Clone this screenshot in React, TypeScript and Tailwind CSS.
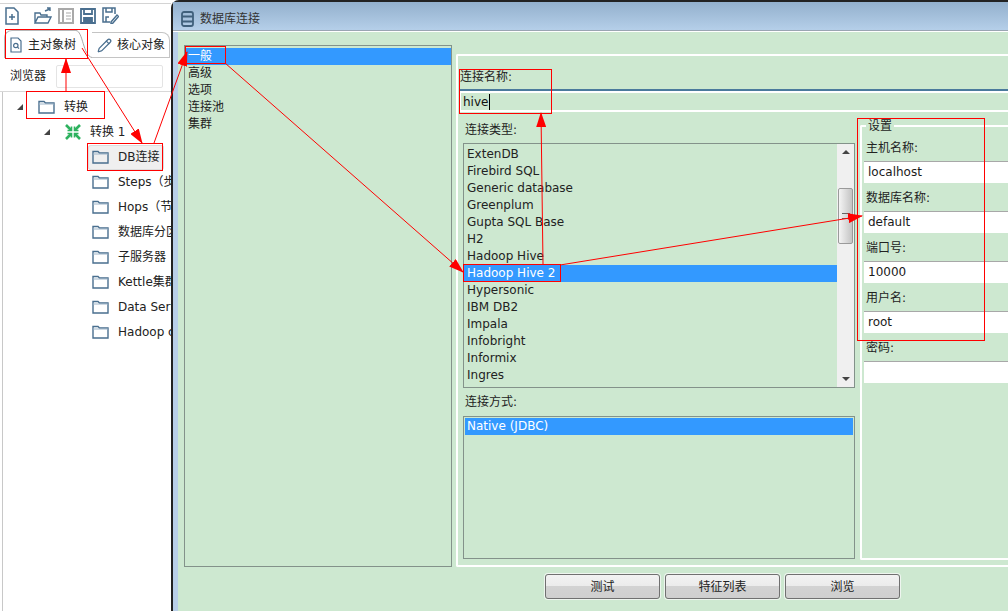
import { Pencil } from 'lucide-react';

const font = '[font-family:"DejaVu_Sans","Noto_Sans_CJK_SC",sans-serif]';

const types = [
  'ExtenDB', 'Firebird SQL', 'Generic database', 'Greenplum', 'Gupta SQL Base', 'H2', 'Hadoop Hive',
  'Hadoop Hive 2', 'Hypersonic', 'IBM DB2', 'Impala', 'Infobright', 'Informix', 'Ingres',
];
const treeItems = ['DB连接', 'Steps（步骤）', 'Hops（节点连接）', '数据库分区', '子服务器', 'Kettle集群', 'Data Services', 'Hadoop clusters'];
const settings = [
  { label: '主机名称:', value: 'localhost' },
  { label: '数据库名称:', value: 'default' },
  { label: '端口号:', value: '10000' },
  { label: '用户名:', value: 'root' },
  { label: '密码:', value: '' },
];

function Folder() {
  return (
    <svg width="17" height="14" viewBox="0 0 17 14" className="shrink-0" fill="none">
      <path d="M1 3V1.500h5L7.500 3H16v10H1z" stroke="#4a6f8f" strokeWidth="1.400" />
      <path d="M1 4h15" stroke="#9db4c8" strokeWidth="1" />
    </svg>
  );
}

function Toolbar() {
  return (
    <div className="flex h-[28px] items-center gap-[6px] pl-[5px] pt-[3px]">
      <svg width="14" height="18" viewBox="0 0 14 18" fill="none" stroke="#4a6f8f" strokeWidth="1.500">
        <path d="M1 1h8l4 4v12H1zM4 10h6M7 7v6" />
      </svg>
      <svg className="ml-[9px]" width="18" height="18" viewBox="0 0 18 18" fill="none" stroke="#4a6f8f" strokeWidth="1.400">
        <path d="M1 16V6h5l1 2h6v2M1 16l3-6h13l-3 6zM11 4l5-2M13 1h3v3" />
      </svg>
      <svg width="16" height="16" viewBox="0 0 16 16" fill="none" stroke="#a9a9a9" strokeWidth="2">
        <path d="M1 1h14v14H1zM5 1v14" />
        <path d="M8 5h5M8 8h5M8 11h5" strokeWidth="1.200" />
      </svg>
      <svg width="16" height="16" viewBox="0 0 16 16" fill="none" stroke="#4a6f8f" strokeWidth="1.800">
        <path d="M1 1h14v14H1zM4 1v5h8V1" />
        <path d="M4 10h8v5H4z" fill="#4a6f8f" />
      </svg>
      <svg width="17" height="17" viewBox="0 0 17 17" fill="none" stroke="#4a6f8f" strokeWidth="1.500">
        <path d="M8 15H1V1h12v6M4 1v4h6V1M4 15v-5h3M9 15l6-7 1.500 1.500-6 7H9z" />
      </svg>
    </div>
  );
}

function Tabs() {
  return (
    <div className="flex h-[30px] items-end pl-[4px]">
      <div className="flex h-[28px] w-[72px] shrink-0 items-center gap-[6px] rounded-tl-[8px] border-l border-t border-[#b8b8b8] pl-[5px]">
        <svg width="12" height="16" viewBox="0 0 12 16" fill="none" stroke="#4a6f8f" strokeWidth="1.200" className="shrink-0">
          <path d="M1 1h7l3 3v11H1z" />
          <circle cx="5.800" cy="8.500" r="2.200" />
          <path d="M7.500 10.200l1.500 1.500" />
        </svg>
        <span className="whitespace-nowrap">主对象树</span>
      </div>
      <svg width="16" height="28" viewBox="0 0 16 28" fill="none" className="shrink-0">
        <path d="M0 .5C7 1 7 26 16 27.500" stroke="#a8a8a8" />
      </svg>
      <div className="flex h-[26px] w-[78px] shrink-0 items-center gap-[5px] rounded-tr-[8px] border-b border-r border-t border-[#c4c4c4] pl-[5px]">
        <Pencil size={15} className="text-[#4a6f8f]" />
        <span className="whitespace-nowrap">核心对象</span>
      </div>
    </div>
  );
}

function LeftPanel() {
  return (
    <div className="w-[171px] shrink-0 overflow-hidden bg-white text-[12px] text-[#222]">
      <div className="mt-[3px] h-px w-[171px] bg-[#d4d4d4]" />
      <div className="-mt-[4px]">
        <Toolbar />
      </div>
      <Tabs />
      <div className="flex h-[34px] items-center gap-[10px] border-b border-[#d8d8d8] pl-[10px] pt-[3px]">
        浏览器
        <div className="h-[23px] w-[107px] rounded-[2px] border border-[#e4e4e4] bg-white" />
      </div>
      <div className="ml-[2px] flex min-h-[519px] flex-col border-l border-[#c8c8c8] pt-[2px]">
        <div className="flex h-[25px] items-center pl-[14px]">
          <span className="mr-[15px] h-0 w-0 border-b-[6px] border-l-[6px] border-b-[#444] border-l-transparent" />
          <Folder />
          <span className="ml-[9px]">转换</span>
        </div>
        <div className="flex h-[25px] items-center pl-[41px]">
          <span className="mr-[15px] h-0 w-0 border-b-[6px] border-l-[6px] border-b-[#444] border-l-transparent" />
          <svg width="16" height="16" viewBox="0 0 16 16" fill="none" stroke="#2eb25f" strokeWidth="2.600">
            <path d="M1 1l5 5M10 10l5 5M15 1l-5 5M6 10l-5 5" />
            <path d="M2.500 6.500h4v-4M13.500 6.500h-4v-4M2.500 9.500h4v4M13.500 9.500h-4v4" strokeWidth="1.600" />
          </svg>
          <span className="ml-[9px]">转换 1</span>
        </div>
        {treeItems.map((item, i) => (
          <div key={item} className={`flex h-[25px] items-center pl-[85px] ${i === 0 ? 'pt-px' : ''}`}>
            <div className={`flex h-[25px] w-[76px] shrink-0 items-center gap-[9px] whitespace-nowrap pl-[4px] ${i === 0 ? 'rounded-[3px] bg-[#efefef] shadow-[inset_0_0_0_1px_#dcdcdc]' : ''}`}>
              <Folder />
              {item}
            </div>
          </div>
        ))}
      </div>
    </div>
  );
}

function ListBox() {
  return (
    <div className="flex h-[245px] w-[392px] border border-[#83928a]">
      <div className="flex-1 pt-[2px]">
        {types.map((t) => (
          <div key={t} className={`h-[17px] pl-[3px] leading-[17px] ${t === 'Hadoop Hive 2' ? 'bg-[#3399ff] text-white' : ''}`}>{t}</div>
        ))}
      </div>
      <div className="relative flex w-[17px] flex-col items-center justify-between bg-[#f0f0f0] py-[6px]">
        <span className="h-0 w-0 border-x-[4px] border-b-[4px] border-x-transparent border-b-[#444]" />
        <span className="h-0 w-0 border-x-[4px] border-t-[4px] border-x-transparent border-t-[#444]" />
        <div className="absolute left-[1px] top-[44px] flex h-[56px] w-[15px] items-center justify-center rounded-[2px] border border-[#9a9a9a] bg-gradient-to-r from-[#f4f4f4] to-[#c4c4c4]">
          <span className="h-[6px] w-[8px] border-y border-[#666]" />
        </div>
      </div>
    </div>
  );
}

function Settings() {
  return (
    <div className="ml-[3px] mt-[13px] h-[435px] flex-1 rounded-l-[2px] border-b-2 border-l-2 border-t-2 border-white pl-[2px]">
      <div className="mb-[8px] ml-[2px] -mt-[8px] h-[14px] w-fit bg-[#cde8d0] px-[2px] leading-[14px]">设置</div>
      <div className="flex flex-col gap-[8px]">
        {settings.map((s) => (
          <div key={s.label}>
            <div className="h-[20px] pl-[2px] leading-[14px]">{s.label}</div>
            <div className="h-[22px] border-t border-[#a8a8a8] bg-white pl-[4px] leading-[21px] text-[#1a1a1a]">{s.value}</div>
          </div>
        ))}
      </div>
    </div>
  );
}

function Button({ label }: { label: string }) {
  return (
    <div className="flex h-[25px] w-[115px] items-center justify-center overflow-hidden rounded-[3px] border border-[#707070] bg-[linear-gradient(#f2f2f2_0%,#ebebeb_48%,#d2d2d2_50%,#cfcfcf_100%)] shadow-[0_0_0_1px_#eef5ef]">
      {label}
    </div>
  );
}

function Dialog() {
  return (
    <div className="flex min-w-0 flex-1 flex-col rounded-tl-[8px] border-l-2 border-t-2 border-[#222] bg-[#b9cfe8] text-[12px] text-[#222]">
      <div className="flex h-[29px] shrink-0 items-center gap-[6px] border-b border-[#9aa5b2] bg-gradient-to-b from-[#93b0cd] to-[#b5cfe9] pl-[8px] pt-[6px] text-[#333]">
        <svg width="13" height="16" viewBox="0 0 13 16" fill="none" stroke="#40607c" strokeWidth="1.800">
          <rect x="1" y="1" width="11" height="14" rx="2" />
          <path d="M1 5.500h11M1 10.500h11" />
        </svg>
        数据库连接
      </div>
      <div className="h-px shrink-0 bg-white" />
      <div className="ml-[5px] flex min-h-0 flex-1 flex-col bg-[#cde8d0] pl-[6px] pt-[13px]">
        <div className="flex h-[522px]">
          <div className="h-[522px] w-[268px] shrink-0 border border-[#83928a] pt-[2px]">
            <div className="h-[17px] bg-[#3399ff] pl-[3px] leading-[17px] text-white">一般</div>
            {['高级', '选项', '连接池', '集群'].map((t) => (
              <div key={t} className="h-[17px] pl-[3px] leading-[17px]">{t}</div>
            ))}
          </div>
          <div className="ml-[4px] mt-[9px] flex h-[513px] min-w-0 flex-1 flex-col rounded-l-[2px] border-b-2 border-l-2 border-t-2 border-white">
            <div className="mt-[14px] pl-[2px] leading-[14px]">连接名称:</div>
            <div className="ml-[1px] mt-[5px] border-t-2 border-[#4a7a9c]">
              <div className="flex h-[21px] items-center border-b-2 border-l-2 border-t-2 border-white pl-[2px] text-[#111]">
                hive<span className="ml-[1px] h-[16px] w-px bg-black" />
              </div>
            </div>
            <div className="flex">
              <div className="ml-[5px] w-[392px] shrink-0">
                <div className="mt-[11px] h-[20px] pl-[2px] leading-[14px]">连接类型:</div>
                <ListBox />
                <div className="mt-[7px] h-[21px] pl-[2px] leading-[14px]">连接方式:</div>
                <div className="h-[143px] w-[392px] border border-[#83928a] p-px">
                  <div className="h-[17px] bg-[#3399ff] pl-[2px] leading-[17px] text-white">Native (JDBC)</div>
                </div>
              </div>
              <div className="ml-[2px] flex min-w-0 flex-1">
                <Settings />
              </div>
            </div>
          </div>
        </div>
        <div className="mt-[7px] flex gap-[5px] pl-[361px]">
          <Button label="测试" />
          <Button label="特征列表" />
          <Button label="浏览" />
        </div>
      </div>
    </div>
  );
}

// the red marks someone drew on top of the screenshot
function Annotations() {
  const rects = [
    [5, 29, 82, 29], [26, 91, 78, 27], [87, 143, 75, 27], [185, 46, 40, 17],
    [459, 69, 92, 44], [463, 264, 97, 17], [857, 118, 127, 222],
  ];
  const arrows = [
    [66, 91, 66, 59], [82, 48, 142, 143], [154, 143, 187, 52], [225, 63, 463, 272],
    [543, 264, 541, 113], [560, 265, 862, 216],
  ];
  return (
    <svg className="pointer-events-none absolute inset-0" width="1008" height="611">
      <defs>
        <marker id="head" markerWidth="15" markerHeight="10" refX="14" refY="5" orient="auto" markerUnits="userSpaceOnUse">
          <path d="M0 0L15 5L0 10z" fill="#ff0000" />
        </marker>
      </defs>
      {rects.map(([x, y, w, h]) => (
        <rect key={`${x}-${y}`} x={x + 0.5} y={y + 0.5} width={w} height={h} fill="none" stroke="#ff0000" />
      ))}
      {arrows.map(([x1, y1, x2, y2]) => (
        <line key={`${x1}-${y1}`} x1={x1} y1={y1} x2={x2} y2={y2} stroke="#ff0000" strokeWidth="1" markerEnd="url(#head)" />
      ))}
    </svg>
  );
}

export default function App() {
  return (
    <div className={`relative flex h-[611px] w-[1008px] overflow-hidden bg-white ${font}`}>
      <LeftPanel />
      <Dialog />
      <Annotations />
    </div>
  );
}
